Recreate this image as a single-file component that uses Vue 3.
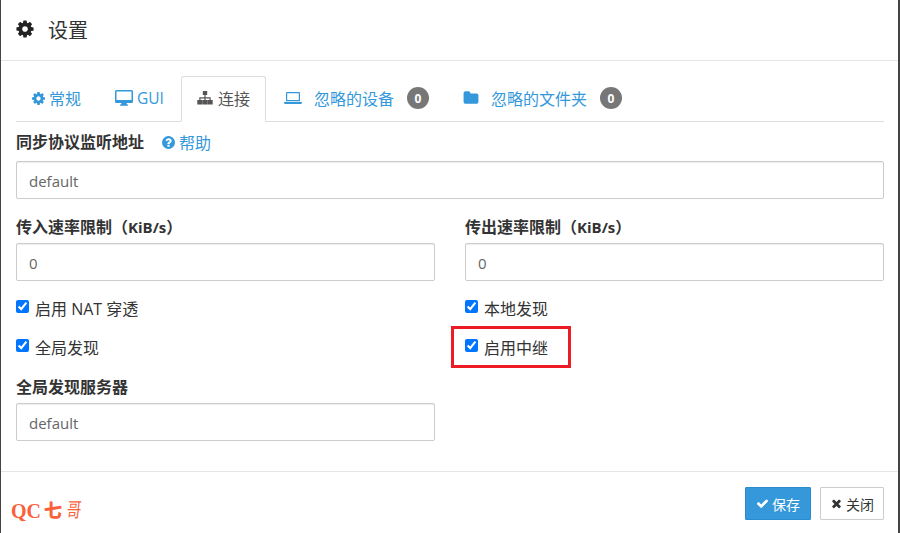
<script setup>
const cog = "M1152 896q0-106-75-181t-181-75-181 75-75 181 75 181 181 75 181-75 75-181zm512-109v222q0 12-8 23t-20 13l-185 28q-19 54-39 91 35 50 107 138 10 12 10 25t-9 23q-27 37-99 108t-94 71q-12 0-26-9l-138-108q-44 23-91 38-16 136-29 186-7 28-36 28h-222q-14 0-24.5-8.5t-11.5-21.5l-28-184q-49-16-90-37l-141 107q-10 9-25 9-14 0-25-11-126-114-165-168-7-10-7-23 0-12 8-23 15-21 51-66.5t54-70.5q-27-50-41-99l-183-27q-13-2-21-12.5t-8-23.5v-222q0-12 8-23t19-13l186-28q14-46 39-92-40-57-107-138-10-12-10-24 0-10 9-23 26-36 98.5-107.5t94.5-71.5q13 0 26 10l138 107q44-23 91-38 16-136 29-186 7-28 36-28h222q14 0 24.5 8.5t11.5 21.5l28 184q49 16 90 37l142-107q9-9 24-9 13 0 25 10 129 119 165 170 7 8 7 22 0 12-8 23-15 21-51 66.5t-54 70.5q26 50 41 98l183 28q13 2 21 12.5t8 23.5z";
const check = "M1671 566q0 40-28 68l-724 724-136 136q-28 28-68 28t-68-28l-136-136-362-362q-28-28-28-68t28-68l136-136q28-28 68-28t68 28l294 295 656-657q28-28 68-28t68 28l136 136q28 28 28 68z";
const times = "M1298 1322q0 40-28 68l-136 136q-28 28-68 28t-68-28l-294-294-294 294q-28 28-68 28t-68-28l-136-136q-28-28-28-68t28-68l294-294-294-294q-28-28-28-68t28-68l136-136q28-28 68-28t68 28l294 294 294-294q28-28 68-28t68 28l136 136q28 28 28 68t-28 68l-294 294 294 294q28 28 28 68z";
const help = "M1024 1376v-192q0-14-9-23t-23-9h-192q-14 0-23 9t-9 23v192q0 14 9 23t23 9h192q14 0 23-9t9-23zm256-672q0-88-55.5-163t-138.5-116-170-41q-243 0-371 213-15 24 8 42l132 100q7 6 19 6 16 0 25-12 53-68 86-92 34-24 86-24 48 0 85.5 26t37.5 59q0 38-20 61t-68 45q-63 28-115.5 86.5t-52.5 125.5v36q0 14 9 23t23 9h192q14 0 23-9t9-23q0-19 21.5-49.5t54.5-49.5q32-18 49-28.5t46-35 44.5-48 28-60.5 12.5-81zm384 192q0 209-103 385.5t-279.5 279.5-385.5 103-385.5-103-279.5-279.5-103-385.5 103-385.5 279.5-279.5 385.5-103 385.5 103 279.5 279.5 103 385.5z";
const folder = "M1728 608v704q0 92-66 158t-158 66h-1216q-92 0-158-66t-66-158v-960q0-92 66-158t158-66h320q92 0 158 66t66 158v32h672q92 0 158 66t66 158z";
</script>

<template>
  <div class="page">
    <div class="modal">
      <header class="head">
        <svg class="title-icon" viewBox="0 0 1792 1792"><path :d="cog" /></svg>
        <h1>设置</h1>
      </header>

      <main class="body">
        <nav class="tabs">
          <a class="tab t1">
            <svg class="ic14" viewBox="0 0 1792 1792"><path :d="cog" /></svg>
            <span>常规</span>
          </a>
          <a class="tab t2">
            <svg class="ic-desktop" viewBox="0 0 18 16"><path d="M1.500 0h15A1.500 1.500 0 0 1 18 1.500v10a1.500 1.500 0 0 1-1.500 1.500h-5l.4 1.500h1.100v1.200H5v-1.200h1.100l.4-1.500h-5A1.500 1.500 0 0 1 0 11.500v-10A1.500 1.500 0 0 1 1.500 0zm0 1.400v8.700h15V1.400z" /></svg>
            <span class="gui">GUI</span>
          </a>
          <a class="tab active">
            <svg class="ic-site" viewBox="0 0 16 14"><path d="M5.800 0h4.400v4H8.600v2.200h5.100V9h2v4.400h-5V9h1.800V7.400H8.600V9h1.900v4.400h-5V9h1.900V7.400H3.500V9h1.800v4.400h-5V9h2V6.200h5.100V4H5.800z" /></svg>
            <span>连接</span>
          </a>
          <a class="tab t4">
            <svg class="ic-laptop" viewBox="0 0 18 12"><path d="M3 0h12a1 1 0 0 1 1 1v8.200H2V1a1 1 0 0 1 1-1zm.2 1.200v6.800h11.600V1.200zM0 10h18v.8c0 .6-.5 1.200-1.200 1.200H1.200C.5 12 0 11.400 0 10.800z" /></svg>
            <span>忽略的设备</span>
            <b class="badge">0</b>
          </a>
          <a class="tab t5">
            <svg class="ic-folder" viewBox="0 0 1792 1792"><path :d="folder" /></svg>
            <span>忽略的文件夹</span>
            <b class="badge">0</b>
          </a>
        </nav>

        <section class="group first">
          <div class="label-row">
            <label>同步协议监听地址</label>
            <a class="help">
              <svg class="ic14" viewBox="0 0 1792 1792"><path :d="help" /></svg>
              <span>帮助</span>
            </a>
          </div>
          <div class="input">default</div>
        </section>

        <div class="grid">
          <section class="group">
            <label>传入速率限制（<span class="latin">KiB/s</span>）</label>
            <div class="input">0</div>
          </section>
          <section class="group">
            <label>传出速率限制（<span class="latin">KiB/s</span>）</label>
            <div class="input">0</div>
          </section>

          <label class="check"><input type="checkbox" checked /><span>启用 NAT 穿透</span></label>
          <label class="check"><input type="checkbox" checked /><span>本地发现</span></label>
          <label class="check"><input type="checkbox" checked /><span>全局发现</span></label>
          <label class="check marked"><input type="checkbox" checked /><span>启用中继</span><i class="redbox"></i></label>

          <section class="group last">
            <label>全局发现服务器</label>
            <div class="input">default</div>
          </section>
        </div>
      </main>

      <footer class="foot">
        <div class="mark"><span class="qc">QC</span><span class="qi">七</span><span class="ge">哥</span></div>
        <div class="buttons">
          <button class="btn primary">
            <svg class="ic13" viewBox="0 0 1792 1792"><path :d="check" /></svg>保存
          </button>
          <button class="btn plain">
            <svg class="ic13" viewBox="0 0 1408 1792"><path :d="times" /></svg>关闭
          </button>
        </div>
      </footer>
    </div>
  </div>
</template>

<style>
html, body { margin: 0; background: #fff; }
</style>

<style scoped>
.page {
  width: 900px;
  height: 533px;
  overflow: hidden;
  background: #fff;
  font-family: "Open Sans", "Noto Sans CJK SC", sans-serif;
  font-size: 16px;
  color: #333;
}
.latin { font-size: 15px; }
.gui { font-size: 15.5px; }
.modal {
  width: 900px;
  height: 533px;
  box-sizing: border-box;
  border-left: 1px solid #444;
  border-right: 2px solid #444;
  display: flex;
  flex-direction: column;
  position: relative;
}
.head {
  height: 61px;
  flex: none;
  box-sizing: border-box;
  border-bottom: 1px solid #e5e5e5;
  display: flex;
  align-items: center;
  padding: 0 0 2px 14px;
}
.title-icon { width: 20px; height: 20px; fill: #222; margin-right: 13px; }
h1 { margin: 0; font-size: 20px; font-weight: 400; color: #333; }
.body { flex: 1; padding: 15px 14px 0 15px; }
.tabs {
  display: flex;
  height: 46px;
  box-sizing: border-box;
  border-bottom: 1px solid #ddd;
  margin-bottom: 10px;
}
.tab {
  display: flex;
  align-items: center;
  height: 46px;
  box-sizing: border-box;
  padding: 0 15px 2px;
  color: #3498db;
  font-size: 16px;
  white-space: nowrap;
}
.tab svg { fill: #3498db; flex: none; }
.t1 { width: 84px; gap: 3px; }
.t2 { width: 81px; gap: 4px; }
.active {
  width: 85px;
  color: #555;
  border: 1px solid #ddd;
  border-bottom: 1px solid #fff;
  border-radius: 3px 3px 0 0;
  gap: 5px;
  padding-left: 15px;
}
.active svg { fill: #555; }
.t4 { margin-left: 2px; gap: 12px; width: 179px; padding-left: 16px; }
.t5 { gap: 12px; padding-left: 16px; }
.ic14 { width: 15px; height: 15px; }
.ic-desktop { width: 18px; height: 16px; }
.ic-site { width: 16px; height: 14px; }
.ic-laptop { width: 18px; height: 12px; }
.ic-folder { width: 16px; height: 16px; }
.badge {
  min-width: 22px;
  height: 22px;
  border-radius: 11px;
  background: #777;
  color: #fff;
  font-size: 12px;
  font-weight: 700;
  display: flex;
  align-items: center;
  justify-content: center;
  margin-left: 1px;
}
.group, .group label { display: block; }
.group label, .label-row label {
  font-size: 16px;
  font-weight: 700;
  line-height: 20px;
  color: #333;
}
.label-row { display: flex; align-items: center; gap: 17px; height: 20px; }
.first { margin-bottom: 18px; }
.help {
  display: flex;
  align-items: center;
  gap: 3px;
  color: #3498db;
  font-size: 16px;
}
.help svg { fill: #3498db; }
.input {
  height: 38px;
  box-sizing: border-box;
  margin-top: 8px;
  border: 1px solid #ccc;
  border-radius: 2px;
  padding: 0 12px;
  font-size: 15px;
  line-height: 38px;
  color: #666;
  box-shadow: inset 0 1px 1px rgba(0, 0, 0, 0.075);
}
.first .input { margin-top: 9px; }
.grid {
  display: grid;
  grid-template-columns: 419px 419px;
  column-gap: 30px;
  align-items: start;
}
.grid .group .input { margin-top: 6px; }
.grid > .group:nth-child(-n+2) { margin-bottom: 17px; }
.check {
  display: flex;
  align-items: center;
  height: 20px;
  margin-bottom: 19px;
  font-size: 16px;
  position: relative;
}
.check input {
  width: 13px;
  height: 13px;
  margin: 0 6px 4px 0;
  accent-color: #0075ff;
}
.last { margin-top: 1px; }
.redbox {
  position: absolute;
  left: -14px;
  top: -11px;
  width: 120px;
  height: 42px;
  box-sizing: border-box;
  border: 3px solid #ed1c24;
}
.foot {
  height: 62px;
  flex: none;
  box-sizing: border-box;
  border-top: 1px solid #e5e5e5;
  display: flex;
  align-items: flex-start;
  justify-content: space-between;
  padding: 15px 14px 0 10px;
}
.mark {
  display: flex;
  align-items: center;
  margin-top: 14px;
  color: #f9603c;
  font-family: "Liberation Serif", "Noto Sans CJK SC", serif;
  line-height: 20px;
}
.qc { font-size: 20px; font-weight: 700; }
.qi { font-size: 18px; font-weight: 900; margin-left: 3px; }
.ge {
  display: inline-block;
  font-size: 16px;
  font-weight: 400;
  margin-left: 4px;
  transform: scale(0.9, 1.25) skewX(-10deg);
}
.buttons { display: flex; gap: 9px; }
.btn {
  height: 33px;
  box-sizing: border-box;
  font: inherit;
  font-size: 14px;
  border-radius: 1px;
  display: flex;
  align-items: center;
  justify-content: center;
  gap: 3px;
  padding: 0;
}
.primary { width: 66px; background: #3498db; border: 1px solid #2a8ccd; color: #fff; }
.primary svg { fill: #fff; }
.plain { width: 64px; background: #fff; border: 1px solid #ccc; color: #333; }
.plain svg { fill: #333; }
.ic13 { width: 13px; height: 13px; }
</style>
